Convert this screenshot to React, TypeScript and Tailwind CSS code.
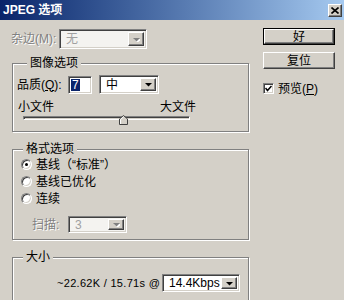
import React from 'react';

// classic win2000 bevels
const sunken =
  'border border-t-[#808080] border-l-[#808080] border-r-white border-b-white shadow-[inset_1px_1px_0_#404040,inset_-1px_-1px_0_#d4d0c8]';
const raised =
  'border border-t-white border-l-white border-r-[#404040] border-b-[#404040] shadow-[inset_-1px_-1px_0_#808080,inset_1px_1px_0_#d4d0c8] bg-[#d4d0c8]';
const etched =
  'border border-[#808080] shadow-[inset_1px_1px_0_#fff,1px_1px_0_#fff] min-w-0';

function Arrow({ disabled }: { disabled?: boolean }) {
  return (
    <div className={`${raised} w-[16px] h-full flex items-center justify-center shrink-0`}>
      <svg width="8" height="5" viewBox="0 0 8 5">
        {disabled && <polygon points="2,2 9,2 5.5,6" fill="#fff" />}
        <polygon points="1,1 8,1 4.5,4.5" fill={disabled ? '#808080' : '#000'} />
      </svg>
    </div>
  );
}

function Combo({ value, disabled, className }: { value: string; disabled?: boolean; className: string }) {
  return (
    <div className={`${sunken} ${className} flex items-stretch p-[2px] ${disabled ? 'bg-[#f4f3f0]' : 'bg-white'}`}>
      <div className={`flex-1 flex items-center pl-[4px] whitespace-nowrap ${disabled ? 'text-[#a0a0a0]' : 'text-black'}`}>{value}</div>
      <Arrow disabled={disabled} />
    </div>
  );
}

function Radio({ checked, label }: { checked?: boolean; label: string }) {
  return (
    <div className="h-[17px] flex items-center pl-[8px] gap-[4px]">
      <div className="w-[11px] h-[11px] rounded-full border border-t-[#808080] border-l-[#808080] border-r-white border-b-white bg-white shadow-[inset_1px_1px_0_#404040,inset_-1px_-1px_0_#d4d0c8] flex items-center justify-center">
        {checked && <div className="w-[3px] h-[3px] rounded-full bg-black" />}
      </div>
      <span>{label}</span>
    </div>
  );
}

function Legend({ children }: { children: React.ReactNode }) {
  return <legend className="ml-[10px] px-[3px] leading-[14px] bg-[#d4d0c8]">{children}</legend>;
}

export default function App() {
  return (
    <div className="w-[344px] h-[300px] overflow-hidden bg-[#d4d0c8] text-[12px] text-black font-['Liberation_Sans','Noto_Sans_CJK_SC',sans-serif]">
      {/* title bar */}
      <div className="h-[20px] flex items-center bg-gradient-to-r from-[#0a246a] to-[#a6caf0] pl-[3px] pr-[2px]">
        <span className="text-white font-bold text-[12px] leading-none">JPEG 选项</span>
        <div className="flex-1" />
        <div className={`${raised} w-[14px] h-[13px] flex items-center justify-center`}>
          <svg width="8" height="7" viewBox="0 0 8 7">
            <path d="M0.5 0.5 L7.5 6.5 M7.5 0.5 L0.5 6.5" stroke="#000" strokeWidth="1.6" />
          </svg>
        </div>
      </div>

      <div className="flex pl-[12px]">
        {/* left column */}
        <div className="w-[237px] flex flex-col">
          <div className="mt-[9px] h-[20px] flex items-center">
            <span className="w-[48px] -ml-[1px] text-[#808080] [text-shadow:1px_1px_0_#fff]">杂边(M):</span>
            <Combo value="无" disabled className="w-[88px] h-[20px]" />
          </div>

          <fieldset className={`${etched} mt-[7px] pl-[4px] pb-[11px]`}>
            <Legend>图像选项</Legend>
            <div className="mt-[5px] h-[19px] flex items-center">
              <span className="w-[51px]">品质(<span className="underline">Q</span>):</span>
              <div className={`${sunken} bg-white w-[24px] h-[18px] flex items-center pl-[2px]`}>
                <span className="bg-[#0a246a] text-white leading-[12px] px-[1px]">7</span>
              </div>
              <Combo value="中" className="ml-[7px] w-[60px] h-[19px]" />
            </div>
            <div className="mt-[6px] h-[14px] flex items-center justify-between pr-[52px]">
              <span className="ml-[1px]">小文件</span>
              <span>大文件</span>
            </div>
            <div className="relative mt-[2px] ml-[6px] w-[167px] h-[4px] border border-t-[#808080] border-l-[#808080] border-r-white border-b-white shadow-[inset_1px_1px_0_#404040]">
              <svg className="absolute left-[95px] -top-[2px]" width="9" height="10" viewBox="0 0 9 10">
                <polygon points="0.5,4 4.5,0.5 8.5,4 8.5,9.5 0.5,9.5" fill="#d4d0c8" stroke="#404040" />
                <polyline points="1.5,9 1.5,4.4 4.5,1.8" fill="none" stroke="#fff" />
              </svg>
            </div>
          </fieldset>

          <fieldset className={`${etched} mt-[10px] pb-[6px]`}>
            <Legend>格式选项</Legend>
            <Radio checked label="基线（“标准”）" />
            <Radio label="基线已优化" />
            <Radio label="连续" />
            <div className="mt-[9px] h-[17px] flex items-center pl-[19px]">
              <span className="w-[36px] text-[#808080] [text-shadow:1px_1px_0_#fff]">扫描:</span>
              <Combo value="3" disabled className="w-[59px] h-[17px]" />
            </div>
          </fieldset>

          <fieldset className={`${etched} mt-[10px] h-[80px]`}>
            <Legend>大小</Legend>
            <div className="mt-[10px] h-[18px] flex items-center pl-[44px]">
              <span className="w-[105px] whitespace-nowrap text-[11px] tracking-[0.3px]">~22.62K / 15.71s @</span>
              <Combo value="14.4Kbps" className="w-[78px] h-[18px]" />
            </div>
          </fieldset>
        </div>

        {/* right column */}
        <div className="ml-[14px] w-[72px] flex flex-col">
          <div className="mt-[8px] h-[17px] border border-black">
            <div className={`${raised} h-full flex items-center justify-center`}>好</div>
          </div>
          <div className={`${raised} mt-[7px] h-[17px] flex items-center justify-center`}>复位</div>
          <div className="mt-[14px] h-[11px] flex items-center gap-[4px]">
            <div className={`${sunken} bg-white w-[11px] h-[11px] flex items-center justify-center`}>
              <svg width="7" height="7" viewBox="0 0 7 7">
                <path d="M0.5 3 L2.5 5.5 L6.5 1" fill="none" stroke="#000" strokeWidth="1.5" />
              </svg>
            </div>
            <span>预览(<span className="underline">P</span>)</span>
          </div>
        </div>
      </div>
    </div>
  );
}
